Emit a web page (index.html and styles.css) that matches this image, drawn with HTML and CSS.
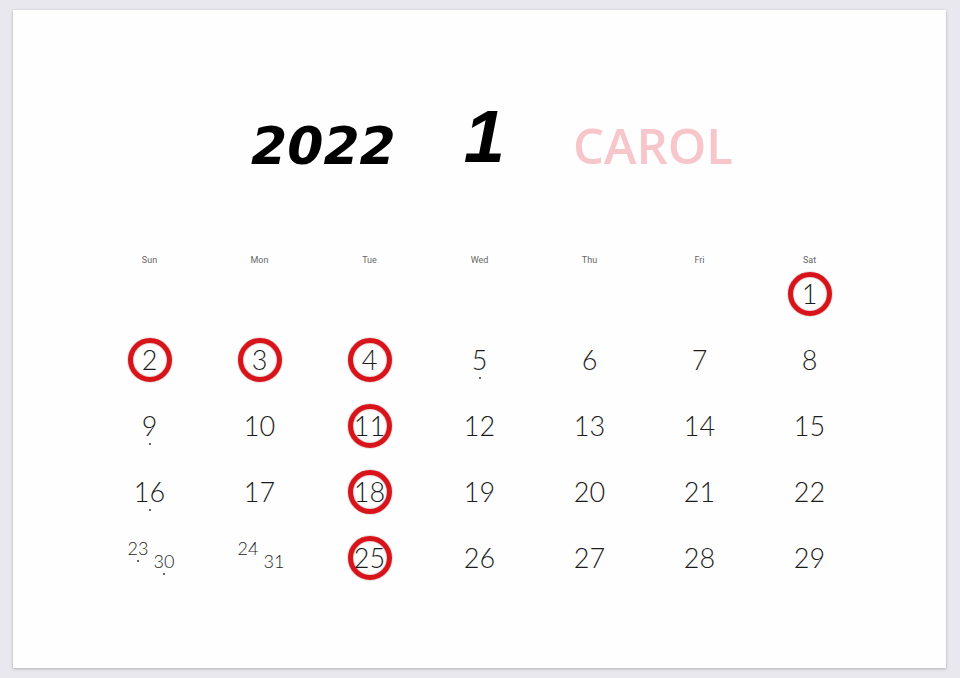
FILE: index.html
```html
<!DOCTYPE html>
<html lang="en">
<head>
<meta charset="utf-8">
<title>2022 1 CAROL</title>
<link rel="stylesheet" href="styles.css">
</head>
<body>
<div class="card">
  <header class="title">
    <span class="year">2022</span>
    <span class="month">1</span>
    <span class="name">CAROL</span>
  </header>
  <div class="weekdays">
    <span>Sun</span><span>Mon</span><span>Tue</span><span>Wed</span><span>Thu</span><span>Fri</span><span>Sat</span>
  </div>
  <div class="days">
    <div class="cell"></div><div class="cell"></div><div class="cell"></div><div class="cell"></div><div class="cell"></div><div class="cell"></div>
    <div class="cell"><span class="num ring">1</span></div>

    <div class="cell"><span class="num ring">2</span></div>
    <div class="cell"><span class="num ring">3</span></div>
    <div class="cell"><span class="num ring">4</span></div>
    <div class="cell"><span class="num dot">5</span></div>
    <div class="cell"><span class="num">6</span></div>
    <div class="cell"><span class="num">7</span></div>
    <div class="cell"><span class="num">8</span></div>

    <div class="cell"><span class="num dot">9</span></div>
    <div class="cell"><span class="num">10</span></div>
    <div class="cell"><span class="num ring">11</span></div>
    <div class="cell"><span class="num">12</span></div>
    <div class="cell"><span class="num">13</span></div>
    <div class="cell"><span class="num">14</span></div>
    <div class="cell"><span class="num">15</span></div>

    <div class="cell"><span class="num dot">16</span></div>
    <div class="cell"><span class="num">17</span></div>
    <div class="cell"><span class="num ring">18</span></div>
    <div class="cell"><span class="num">19</span></div>
    <div class="cell"><span class="num">20</span></div>
    <div class="cell"><span class="num">21</span></div>
    <div class="cell"><span class="num">22</span></div>

    <div class="cell"><span class="split"><span class="hi sdot">23</span><span class="lo sdot">30</span></span></div>
    <div class="cell"><span class="split"><span class="hi">24</span><span class="lo">31</span></span></div>
    <div class="cell"><span class="num ring">25</span></div>
    <div class="cell"><span class="num">26</span></div>
    <div class="cell"><span class="num">27</span></div>
    <div class="cell"><span class="num">28</span></div>
    <div class="cell"><span class="num">29</span></div>
  </div>
</div>
</body>
</html>
```
FILE: styles.css
```css
* { box-sizing: border-box; }

html, body {
  margin: 0;
  padding: 0;
  background: #e9e8ee;
}

body {
  width: 960px;
  height: 678px;
  padding: 10px 14px 10px 13px;
  font-family: "Lato", "Liberation Sans", sans-serif;
}

.card {
  width: 933px;
  height: 658px;
  background: #fefefe;
  box-shadow: 0 1px 3px rgba(0, 0, 0, 0.22), 0 0 1px rgba(0, 0, 0, 0.15);
  padding-top: 92px;
}

.title {
  display: flex;
  justify-content: center;
  align-items: baseline;
  gap: 68px;
  padding-left: 25px;
  line-height: 1;
}

.year {
  font-family: "DejaVu Sans", sans-serif;
  font-weight: bold;
  font-style: oblique;
  font-size: 52px;
  color: #000;
}

.month {
  font-family: "Liberation Sans", sans-serif;
  font-weight: bold;
  font-style: italic;
  font-size: 74px;
  color: #000;
  position: relative;
  top: -2px;
}

.name {
  font-family: "Open Sans", sans-serif;
  font-weight: 600;
  font-size: 49px;
  color: #f6c6cb;
}

.weekdays {
  display: grid;
  grid-template-columns: repeat(7, 110px);
  justify-content: center;
  margin-top: 78px;
  height: 12px;
  line-height: 12px;
  font-family: "Roboto", sans-serif;
  font-size: 9px;
  color: #666;
  text-align: center;
}

.days {
  display: grid;
  grid-template-columns: repeat(7, 110px);
  grid-auto-rows: 66px;
  justify-content: center;
  margin-top: 6px;
}

.cell {
  display: flex;
  justify-content: center;
  align-items: flex-start;
}

.num {
  position: relative;
  display: block;
  width: 44px;
  height: 44px;
  line-height: 44px;
  text-align: center;
  font-size: 27px;
  font-weight: 300;
  color: #1c1c1c;
  white-space: nowrap;
}

.ring {
  border: 5px solid #d81319;
  border-radius: 50%;
  line-height: 34px;
  box-shadow: inset 0 0 1.5px rgba(90, 0, 0, 0.7), 0 0 1.5px rgba(90, 0, 0, 0.6);
}

.dot::after,
.sdot::after {
  content: "";
  position: absolute;
  left: 50%;
  width: 2px;
  height: 2px;
  margin-left: -1px;
  border-radius: 50%;
  background: #333;
}

.dot::after { top: 39px; }

.split {
  display: flex;
  align-items: flex-start;
  gap: 5px;
  height: 44px;
  padding-top: 3px;
  margin-left: 3px;
  font-size: 18px;
  font-weight: 300;
  line-height: 18px;
  color: #1c1c1c;
}

.split .hi,
.split .lo {
  position: relative;
  display: block;
}

.split .lo { margin-top: 13px; }

.sdot::after { top: 21px; }
```
